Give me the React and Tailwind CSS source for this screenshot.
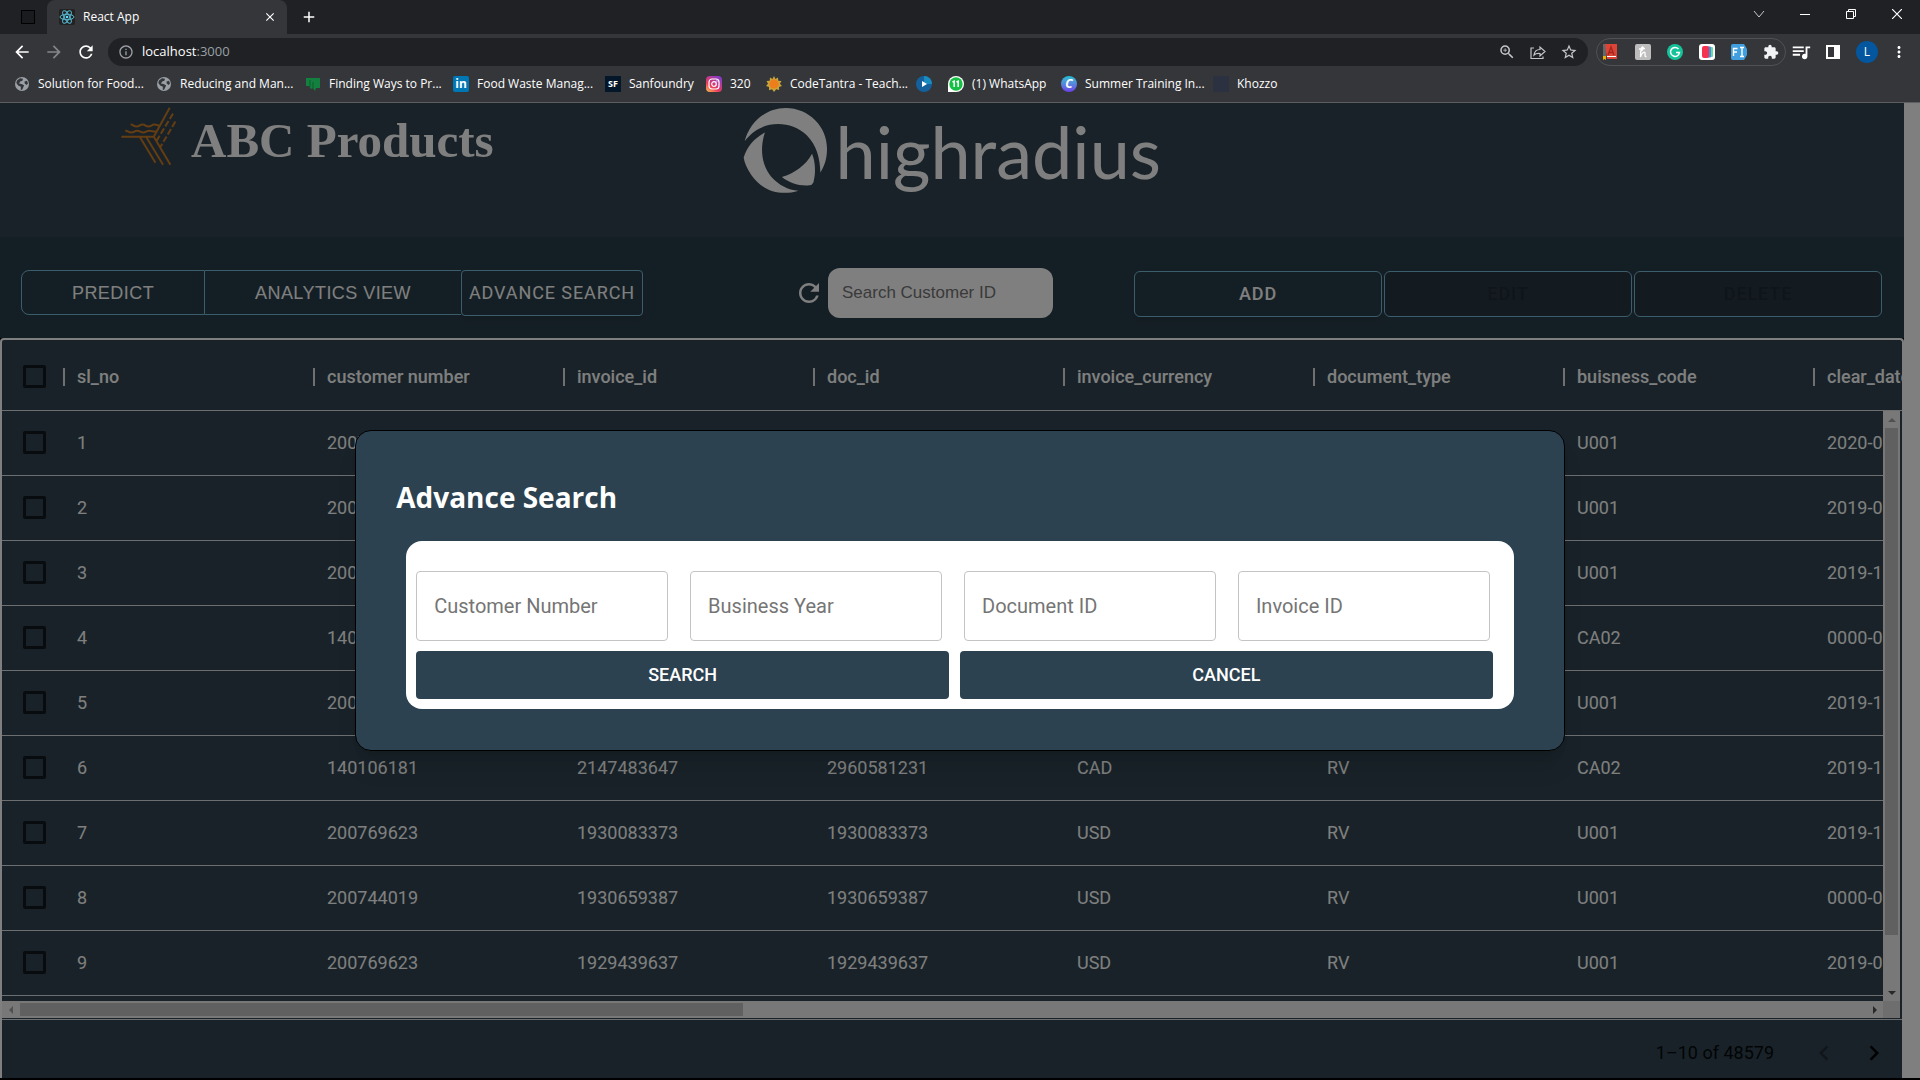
import React from "react";
import {
  MdRefresh,
  MdArrowBack,
  MdArrowForward,
  MdInfoOutline,
  MdClose,
  MdAdd,
  MdZoomIn,
  MdStarBorder,
  MdExtension,
  MdQueueMusic,
  MdMoreVert,
  MdKeyboardArrowLeft,
  MdKeyboardArrowRight,
} from "react-icons/md";

const uiFont = "font-['Open_Sans','Noto_Sans',sans-serif]";

function Globe() {
  return (
    <svg viewBox="0 0 16 16" className="size-4 shrink-0" aria-hidden="true">
      <circle cx="8" cy="8" r="7" fill="#9aa0a6" />
      <path d="M3 4.5l3-2.2 3 .4-.6 2L6.200 5.500 5 7.500l2.500.6 2.600 1.200-1 2.500L8 14l-1.300-.5.2-2.700-2.700-1.300L2.300 7z" fill="#35363a" />
      <path d="M10.500 5.500l2.500-.8 1 2.800-1.500 1.500-1.800-1.500z" fill="#35363a" />
    </svg>
  );
}

function GreenPage() {
  return (
    <svg viewBox="0 0 16 16" className="size-4 shrink-0" aria-hidden="true">
      <path d="M1 2h14v10h-4l-1 3-2-3-2 1-2-3H1z" fill="#14803f" />
      <path d="M5 4v7M8 6v6" stroke="#0c5c2c" />
    </svg>
  );
}

function Badge({ className, children }) {
  return (
    <span className={"flex size-4 shrink-0 items-center justify-center overflow-hidden leading-none " + className} aria-hidden="true">
      {children}
    </span>
  );
}

function Instagram() {
  return (
    <svg viewBox="0 0 16 16" className="size-4 shrink-0" aria-hidden="true">
      <defs>
        <linearGradient id="ig" x1="0" y1="1" x2="0.700" y2="0">
          <stop offset="0" stopColor="#fdc650" />
          <stop offset="0.400" stopColor="#ee3b5b" />
          <stop offset="1" stopColor="#8a3ac8" />
        </linearGradient>
      </defs>
      <rect width="16" height="16" rx="4" fill="url(#ig)" />
      <rect x="3" y="3" width="10" height="10" rx="3" fill="none" stroke="#fff" strokeWidth="1.200" />
      <circle cx="8" cy="8" r="2.300" fill="none" stroke="#fff" strokeWidth="1.200" />
      <circle cx="11" cy="5" r="0.700" fill="#fff" />
    </svg>
  );
}

function Sun() {
  return (
    <svg viewBox="0 0 16 16" className="size-4 shrink-0" aria-hidden="true">
      <path d="M8 0l1.500 3L12 1.500l.3 3.200L15.500 5l-1.600 2.700L16 10l-3 1 .2 3-3-.8L8 16l-2-2.700-3 1L3 11 0 10l2-2.300L.5 5l3.200-.3L4 1.500 6.500 3z" fill="#c9a43a" />
      <circle cx="8" cy="8" r="4.600" fill="#ee7d1b" />
    </svg>
  );
}

function Play() {
  return (
    <svg viewBox="0 0 16 16" className="size-4 shrink-0" aria-hidden="true">
      <circle cx="8" cy="8" r="8" fill="#14609c" />
      <path d="M8 0a8 8 0 0 1 8 8L8 8z" fill="#1b8cc0" />
      <path d="M6 5l5 3-5 3z" fill="#fff" />
    </svg>
  );
}

function WhatsApp() {
  return (
    <svg viewBox="0 0 16 16" className="size-4 shrink-0" aria-hidden="true">
      <path d="M0 16V8a8 8 0 1 1 8 8z" fill="#fff" />
      <circle cx="8" cy="8" r="6.700" fill="#15c144" />
      <path d="M4.500 6l1.700-.8V11M8.500 6l1.700-.8V11" fill="none" stroke="#fff" strokeWidth="1.500" />
    </svg>
  );
}

const bookmarks = [
  { label: "Solution for Food...", icon: <Globe />, width: "w-[102px]" },
  { label: "Reducing and Man...", icon: <Globe />, width: "w-[109px]" },
  { label: "Finding Ways to Pr...", icon: <GreenPage />, width: "w-[108px]" },
  { label: "Food Waste Manag...", icon: <Badge className="rounded-xs bg-[#0077b5] text-xs font-bold text-white">in</Badge>, width: "w-[112px]" },
  { label: "Sanfoundry", icon: <Badge className="bg-[#04162a] text-[9px] font-bold text-white">SF</Badge>, width: "w-[61px]" },
  { label: "320", icon: <Instagram />, width: "w-[20px]" },
  { label: "CodeTantra - Teach...", icon: <Sun />, width: "w-[110px]" },
  { label: "", icon: <Play />, width: "" },
  { label: "(1) WhatsApp", icon: <WhatsApp />, width: "w-[73px]" },
  { label: "Summer Training In...", icon: <Badge className="rounded-full bg-linear-to-b from-[#12bfd0] to-[#6a3be8] text-xs font-bold text-white italic">C</Badge>, width: "w-[112px]" },
  { label: "Khozzo", icon: <Badge className="bg-[#2c3142]" />, width: "w-[40px]" },
];

function ReactLogo() {
  return (
    <svg viewBox="0 0 16 16" className="size-4 shrink-0" aria-hidden="true">
      <rect width="16" height="16" rx="2" fill="#222" />
      <g fill="none" stroke="#56b8d0" strokeWidth="1">
        <ellipse cx="8" cy="8" rx="7" ry="2.700" />
        <ellipse cx="8" cy="8" rx="7" ry="2.700" transform="rotate(60 8 8)" />
        <ellipse cx="8" cy="8" rx="7" ry="2.700" transform="rotate(120 8 8)" />
      </g>
      <circle cx="8" cy="8" r="1.300" fill="#61dafb" />
    </svg>
  );
}

function WindowControls() {
  const cls = "flex h-7 w-[46px] items-center justify-center";
  const line = { fill: "none", stroke: "#fff" };
  return (
    <div className="flex">
      <button className={cls} aria-label="Search tabs">
        <svg viewBox="0 0 12 12" className="size-3"><path d="M1 3l5 6 5-6" {...line} stroke="#c8c8c8" /></svg>
      </button>
      <button className={cls} aria-label="Minimize">
        <svg viewBox="0 0 10 10" className="size-2.5"><path d="M0 5.500h10" {...line} /></svg>
      </button>
      <button className={cls} aria-label="Restore">
        <svg viewBox="0 0 10 10" className="size-2.5"><path d="M.5 2.500h7v7h-7zM2.500 2.500v-2h7v7h-2" {...line} /></svg>
      </button>
      <button className={cls} aria-label="Close window">
        <svg viewBox="0 0 10 10" className="size-2.5"><path d="M0 0l10 10M10 0L0 10" {...line} strokeWidth="1.200" /></svg>
      </button>
    </div>
  );
}

function Extensions() {
  return (
    <div className="flex h-7 items-center gap-4 rounded-full border border-[#505155] px-1.5">
      <svg viewBox="0 0 16 16" className="size-4">
        <path d="M0 0h3v13H0z" fill="#666" />
        <path d="M2 0h12v15H4z" fill="#db4437" />
        <path d="M5 11l3-8 3 8M6 8.500h4" fill="none" stroke="#a3271c" strokeWidth="1.400" />
        <path d="M4 12.500h9" stroke="#fff" />
        <path d="M0 12h3v4l-1.500-1L0 16z" fill="#e8b004" />
      </svg>
      <svg viewBox="0 0 16 16" className="size-4">
        <rect width="16" height="16" rx="2" fill="#bdbdbd" />
        <path d="M5 8c3-1 4-5 2.500-5S5.500 8 5.500 13c1-4 4-6 4.500-4s-1 4 1.500 3.500M4 5l6-.5" fill="none" stroke="#fff" strokeWidth="1.300" />
      </svg>
      <svg viewBox="0 0 16 16" className="size-4">
        <circle cx="8" cy="8" r="8" fill="#15c39a" />
        <path d="M11.500 5A4.500 4.500 0 1 0 12.500 8.500H9" fill="none" stroke="#fff" strokeWidth="1.500" />
      </svg>
      <svg viewBox="0 0 16 16" className="size-4">
        <rect width="16" height="16" rx="3" fill="#fff" />
        <rect x="10" y="3" width="4" height="10" rx="1" fill="#6adf8f" />
        <rect x="8" y="2.500" width="4" height="11" rx="1" fill="#3d8ff0" />
        <rect x="3" y="2" width="7" height="12" rx="2" fill="#f5324f" />
      </svg>
      <svg viewBox="0 0 16 16" className="size-4">
        <path d="M2 0h11l3 5v6l-3 5H2a2 2 0 0 1-2-2V2a2 2 0 0 1 2-2z" fill="#429fdf" />
        <path d="M2.500 12V4.500h4M2.500 8h3.500M9 3.500h4M9 12.500h4M11 3.500v9" fill="none" stroke="#fff" strokeWidth="1.400" />
      </svg>
      <MdExtension className="size-4 text-[#f1f3f4]" />
    </div>
  );
}

function Chrome() {
  return (
    <header className={"shrink-0 bg-[#35363a] text-xs text-white " + uiFont}>
      <div className="flex h-[34px] bg-[#202124]">
        <div className="flex w-[47px] items-center justify-end pr-3">
          <span className="h-3.5 w-3.5 border border-black bg-[#1a1b1e]" />
        </div>
        <div className="flex w-60 items-center gap-2 rounded-t-lg bg-[#35363a] pr-2.5 pl-3">
          <ReactLogo />
          <span className="grow">React App</span>
          <button aria-label="Close tab"><MdClose className="size-3.5" /></button>
        </div>
        <button className="flex w-11 items-center justify-center" aria-label="New tab"><MdAdd className="size-[18px]" /></button>
        <div className="ml-auto"><WindowControls /></div>
      </div>
      <div className="flex h-[35px] items-center pr-3 pl-3">
        <div className="flex items-center gap-3 pr-3">
          <button aria-label="Back"><MdArrowBack className="size-5" /></button>
          <button aria-label="Forward"><MdArrowForward className="size-5 text-[#85868a]" /></button>
          <button aria-label="Reload"><MdRefresh className="size-5" /></button>
        </div>
        <div className="flex h-7 grow items-center gap-2 rounded-full bg-[#202124] px-2.5">
          <MdInfoOutline className="size-4 text-[#9aa0a6]" />
          <span className="grow text-[13px]">localhost<span className="text-[#9aa0a6]">:3000</span></span>
          <div className="flex items-center gap-3.5 text-[#c4c7c9]">
            <button aria-label="Zoom"><MdZoomIn className="size-[18px]" /></button>
            <button aria-label="Share">
              <svg viewBox="0 0 16 16" className="size-4" fill="none" stroke="currentColor" strokeWidth="1.200">
                <path d="M4 4H1v10.500h12v-2M4 11c.5-4 2.500-5.500 6-5.500V3l5 4.500-5 4.500V9.500C7 9.300 5.500 9.500 4 11z" />
              </svg>
            </button>
            <button aria-label="Bookmark"><MdStarBorder className="size-[18px]" /></button>
          </div>
        </div>
        <div className="flex items-center pl-2">
          <Extensions />
          <div className="flex items-center gap-3 pl-1">
            <MdQueueMusic className="size-[22px]" />
            <svg viewBox="0 0 14 14" className="ml-0.5 size-3.5"><path d="M0 0h14v14H0zM2 2v10h6V2z" fill="#fff" fillRule="evenodd" /></svg>
            <span className="ml-1 flex size-[22px] items-center justify-center rounded-full bg-[#04569f]">L</span>
            <button aria-label="Menu"><MdMoreVert className="size-[18px]" /></button>
          </div>
        </div>
      </div>
      <nav className="flex h-[33px] items-center gap-4 px-3.5 pb-1" aria-label="Bookmarks">
        {bookmarks.map((b, i) => (
          <a key={i} href="#" className="flex items-center gap-2 whitespace-nowrap" aria-label={b.label || "Player"}>
            {b.icon}
            {b.label && <span className={b.width}>{b.label}</span>}
          </a>
        ))}
      </nav>
      <div className="h-px bg-[#5c5e61]" />
    </header>
  );
}

function AbcLogo() {
  return (
    <svg viewBox="62 38 170 178" className="h-[59px] w-[57px]" fill="none" stroke="#c87a26" strokeWidth="6" aria-hidden="true">
      <path d="M65 128H163L211 40M163 128L213 212M141 130L191 212M122 130L168 206" />
      <path d="M221 58L170 142M228 82L182 160" strokeDasharray="19 7" />
      <path d="M93 91c9 0 9 6 18 6s9-6 18-6 9 6 18 6 9-6 18-6 8 3 15 3M77 110c9 0 9 5 18 5s9-5 18-5 9 5 18 5 9-5 18-5 12 3 22 2" />
    </svg>
  );
}

function HighradiusMark() {
  return (
    <svg viewBox="40 36 256 260" className="h-[87px] w-[85px]" fill="#fff" aria-hidden="true">
      <path d="M45 138C60 80 110 38 168 38C240 38 293 95 293 160C293 190 286 212 273 232C272 190 262 150 232 120C207 96 178 86 146 86C105 86 70 105 45 138Z" />
      <path d="M106 112C90 160 96 210 125 245C148 270 175 285 207 287C150 305 95 285 65 240C52 220 44 203 42 187C52 155 75 128 106 112Z" />
      <path d="M248 176C258 200 260 235 252 262Q248 270 240 271C210 274 180 264 157 246C195 235 230 210 248 176Z" />
    </svg>
  );
}

function Brand() {
  return (
    <div className="flex h-[134px] shrink-0 items-start bg-[#304550]">
      <div className="flex w-[39%] items-start gap-3.5 pt-1 pl-[120px]">
        <AbcLogo />
        <h1 className="font-['Liberation_Serif',serif] text-[49px] leading-[68px] font-bold whitespace-nowrap text-white">ABC Products</h1>
      </div>
      <div className="flex items-start gap-2 pt-1">
        <HighradiusMark />
        <span className="font-['Lato',sans-serif] text-7xl leading-[88px] text-white">highradius</span>
      </div>
    </div>
  );
}

function Toolbar() {
  const action = "h-[46px] w-[248px] rounded-md border border-[#78bcd8] text-lg font-medium tracking-wider";
  const arial = "font-['Liberation_Sans',sans-serif] text-lg tracking-wide";
  return (
    <div className="flex h-[101px] shrink-0 items-start justify-between bg-[#293e4a] pt-[31px] pr-[22px] pl-[21px] text-white">
      <div className="flex items-start pt-0.5">
        <button className={"h-[45px] w-[184px] rounded-l-lg border border-[#78bcd8] " + arial}>PREDICT</button>
        <button className={"h-[45px] w-64 border-y border-[#78bcd8] " + arial}>ANALYTICS VIEW</button>
        <button className="h-[46px] w-[182px] rounded-sm border border-[#78bcd8] text-lg tracking-wider whitespace-nowrap shadow-md">ADVANCE SEARCH</button>
      </div>
      <div className="flex items-center gap-1 pl-[70px]">
        <button aria-label="Refresh"><MdRefresh className="size-[30px]" /></button>
        <input
          type="text"
          aria-label="Search Customer ID"
          placeholder="Search Customer ID"
          className="h-[50px] w-[225px] rounded-xl bg-white px-3.5 font-['Liberation_Sans',sans-serif] text-[17px] placeholder:text-[#757575]"
        />
      </div>
      <div className="flex gap-0.5 pt-[3px]">
        <button className={action + " shadow-md"}>ADD</button>
        <button disabled className={action + " bg-[#273541] text-[#1f2b34]"}>EDIT</button>
        <button disabled className={action + " bg-[#273541] text-[#1f2b34]"}>DELETE</button>
      </div>
    </div>
  );
}

const columns = ["sl_no", "customer number", "invoice_id", "doc_id", "invoice_currency", "document_type", "buisness_code", "clear_date"];

const rows = [
  ["1", "200769623", "1930438491", "1930438491", "USD", "RV", "U001", "2020-02-11"],
  ["2", "200980828", "1929646410", "1929646410", "USD", "RV", "U001", "2019-08-08"],
  ["3", "200792734", "1929873765", "1929873765", "USD", "RV", "U001", "2019-12-30"],
  ["4", "140105686", "2147483647", "2960623488", "CAD", "RV", "CA02", "0000-00-00"],
  ["5", "200769623", "1930147974", "1930147974", "USD", "RV", "U001", "2019-11-25"],
  ["6", "140106181", "2147483647", "2960581231", "CAD", "RV", "CA02", "2019-12-04"],
  ["7", "200769623", "1930083373", "1930083373", "USD", "RV", "U001", "2019-11-12"],
  ["8", "200744019", "1930659387", "1930659387", "USD", "RV", "U001", "0000-00-00"],
  ["9", "200769623", "1929439637", "1929439637", "USD", "RV", "U001", "2019-06-18"],
];

function Tick({ label }) {
  return (
    <input
      type="checkbox"
      aria-label={label}
      className="ml-[21px] block size-[23px] appearance-none rounded-xs border-[3px] border-[#11191e]"
    />
  );
}

function Arrow({ d, fill }) {
  return (
    <svg viewBox="0 0 8 8" className="size-2 shrink-0" aria-hidden="true">
      <path d={d} fill={fill} />
    </svg>
  );
}

function Grid() {
  return (
    <section className="flex min-h-0 grow flex-col rounded-t-sm border-2 border-b-0 border-white bg-[#304550] text-lg text-white">
      <div className="relative min-h-0 grow overflow-hidden">
        <table className="w-[2061px] table-fixed border-collapse">
          <thead>
            <tr className="h-[70px] border-b border-[#d8dcdf]">
              <th className="w-[61px] p-0 pt-1"><Tick label="Select all rows" /></th>
              {columns.map((c) => (
                <th key={c} className="w-[250px] p-0 pt-1 text-left font-medium">
                  <div className="flex items-center gap-3">
                    <span className="h-[18px] w-0.5 bg-[#e0e0e0]" />
                    {c}
                  </div>
                </th>
              ))}
            </tr>
          </thead>
          <tbody>
            {rows.map((r) => (
              <tr key={r[0]} className="h-[65px] border-b border-[#d8dcdf]">
                <td className="p-0"><Tick label={"Select row " + r[0]} /></td>
                {r.map((v, i) => (
                  <td key={i} className="p-0 pl-3.5">{v}</td>
                ))}
              </tr>
            ))}
          </tbody>
        </table>
        <div className="absolute top-[71px] right-0 bottom-0 w-[19px] border-r-2 border-[#304550]" aria-hidden="true">
          <div className="flex h-full flex-col items-center bg-[#f1f1f1] px-0.5">
            <div className="flex h-[17px] items-center"><Arrow d="M0 6l4-4 4 4z" fill="#a0a0a0" /></div>
            <div className="h-[86%] w-full bg-[#c1c1c1]" />
            <div className="mt-auto flex h-[17px] items-center"><Arrow d="M0 2l4 4 4-4z" fill="#505050" /></div>
          </div>
        </div>
      </div>
      <div className="mr-0.5 flex h-[17px] shrink-0 bg-[#f1f1f1]" aria-hidden="true">
        <div className="flex grow items-center py-0.5">
          <div className="flex w-[18px] justify-center"><Arrow d="M6 0v8L2 4z" fill="#a0a0a0" /></div>
          <div className="h-full w-5/13 bg-[#c1c1c1]" />
          <div className="ml-auto flex w-[17px] justify-center"><Arrow d="M2 0v8l4-4z" fill="#505050" /></div>
        </div>
        <div className="w-[17px] bg-[#dcdcdc]" />
      </div>
      <div className="mt-px flex h-[59px] shrink-0 items-center justify-end border-t border-[#d8dcdf] pt-2 pr-[13px] text-black/90">
        <span className="mr-[35px]">1–10 of 48579</span>
        <button disabled aria-label="Previous page" className="mr-5 text-[#202c34]"><MdKeyboardArrowLeft className="size-[30px]" /></button>
        <button aria-label="Next page" className="text-black"><MdKeyboardArrowRight className="size-[30px]" /></button>
      </div>
    </section>
  );
}

const fields = ["Customer Number", "Business Year", "Document ID", "Invoice ID"];

function AdvanceSearch() {
  const button = "h-12 rounded-sm bg-[#2d4250] text-lg font-medium text-white";
  return (
    <div className="absolute inset-0 flex items-center justify-center bg-black/50">
      <form
        role="dialog"
        aria-labelledby="dialog-title"
        className="w-[63%] rounded-2xl border border-black bg-[#2d4250] px-[50px] pt-[46px] pb-[41px] shadow-xl"
      >
        <h2 id="dialog-title" className="-ml-2.5 font-['Open_Sans',sans-serif] text-[28px] leading-10 font-bold text-white">Advance Search</h2>
        <div className="mt-6 rounded-2xl bg-white pt-[30px] pb-2.5 pl-2.5">
          <div className="grid grid-cols-4 gap-[22px] pr-6">
            {fields.map((f) => (
              <input
                key={f}
                type="text"
                aria-label={f}
                placeholder={f}
                className="h-[70px] min-w-0 rounded-sm border border-[#c4c4c4] px-[17px] text-xl placeholder:text-[#757575]"
              />
            ))}
          </div>
          <div className="mt-2.5 grid grid-cols-2 gap-[11px] pr-[21px]">
            <button type="button" className={button}>SEARCH</button>
            <button type="button" className={button}>CANCEL</button>
          </div>
        </div>
      </form>
    </div>
  );
}

export default function App() {
  return (
    <div className="flex h-screen flex-col overflow-hidden bg-black pb-0.5 font-['Roboto',sans-serif]">
      <Chrome />
      <div className="relative flex min-h-0 grow">
        <main className="flex min-w-0 grow flex-col">
          <Brand />
          <Toolbar />
          <Grid />
        </main>
        <div className="w-4 shrink-0 bg-white" aria-hidden="true" />
        <AdvanceSearch />
      </div>
    </div>
  );
}
